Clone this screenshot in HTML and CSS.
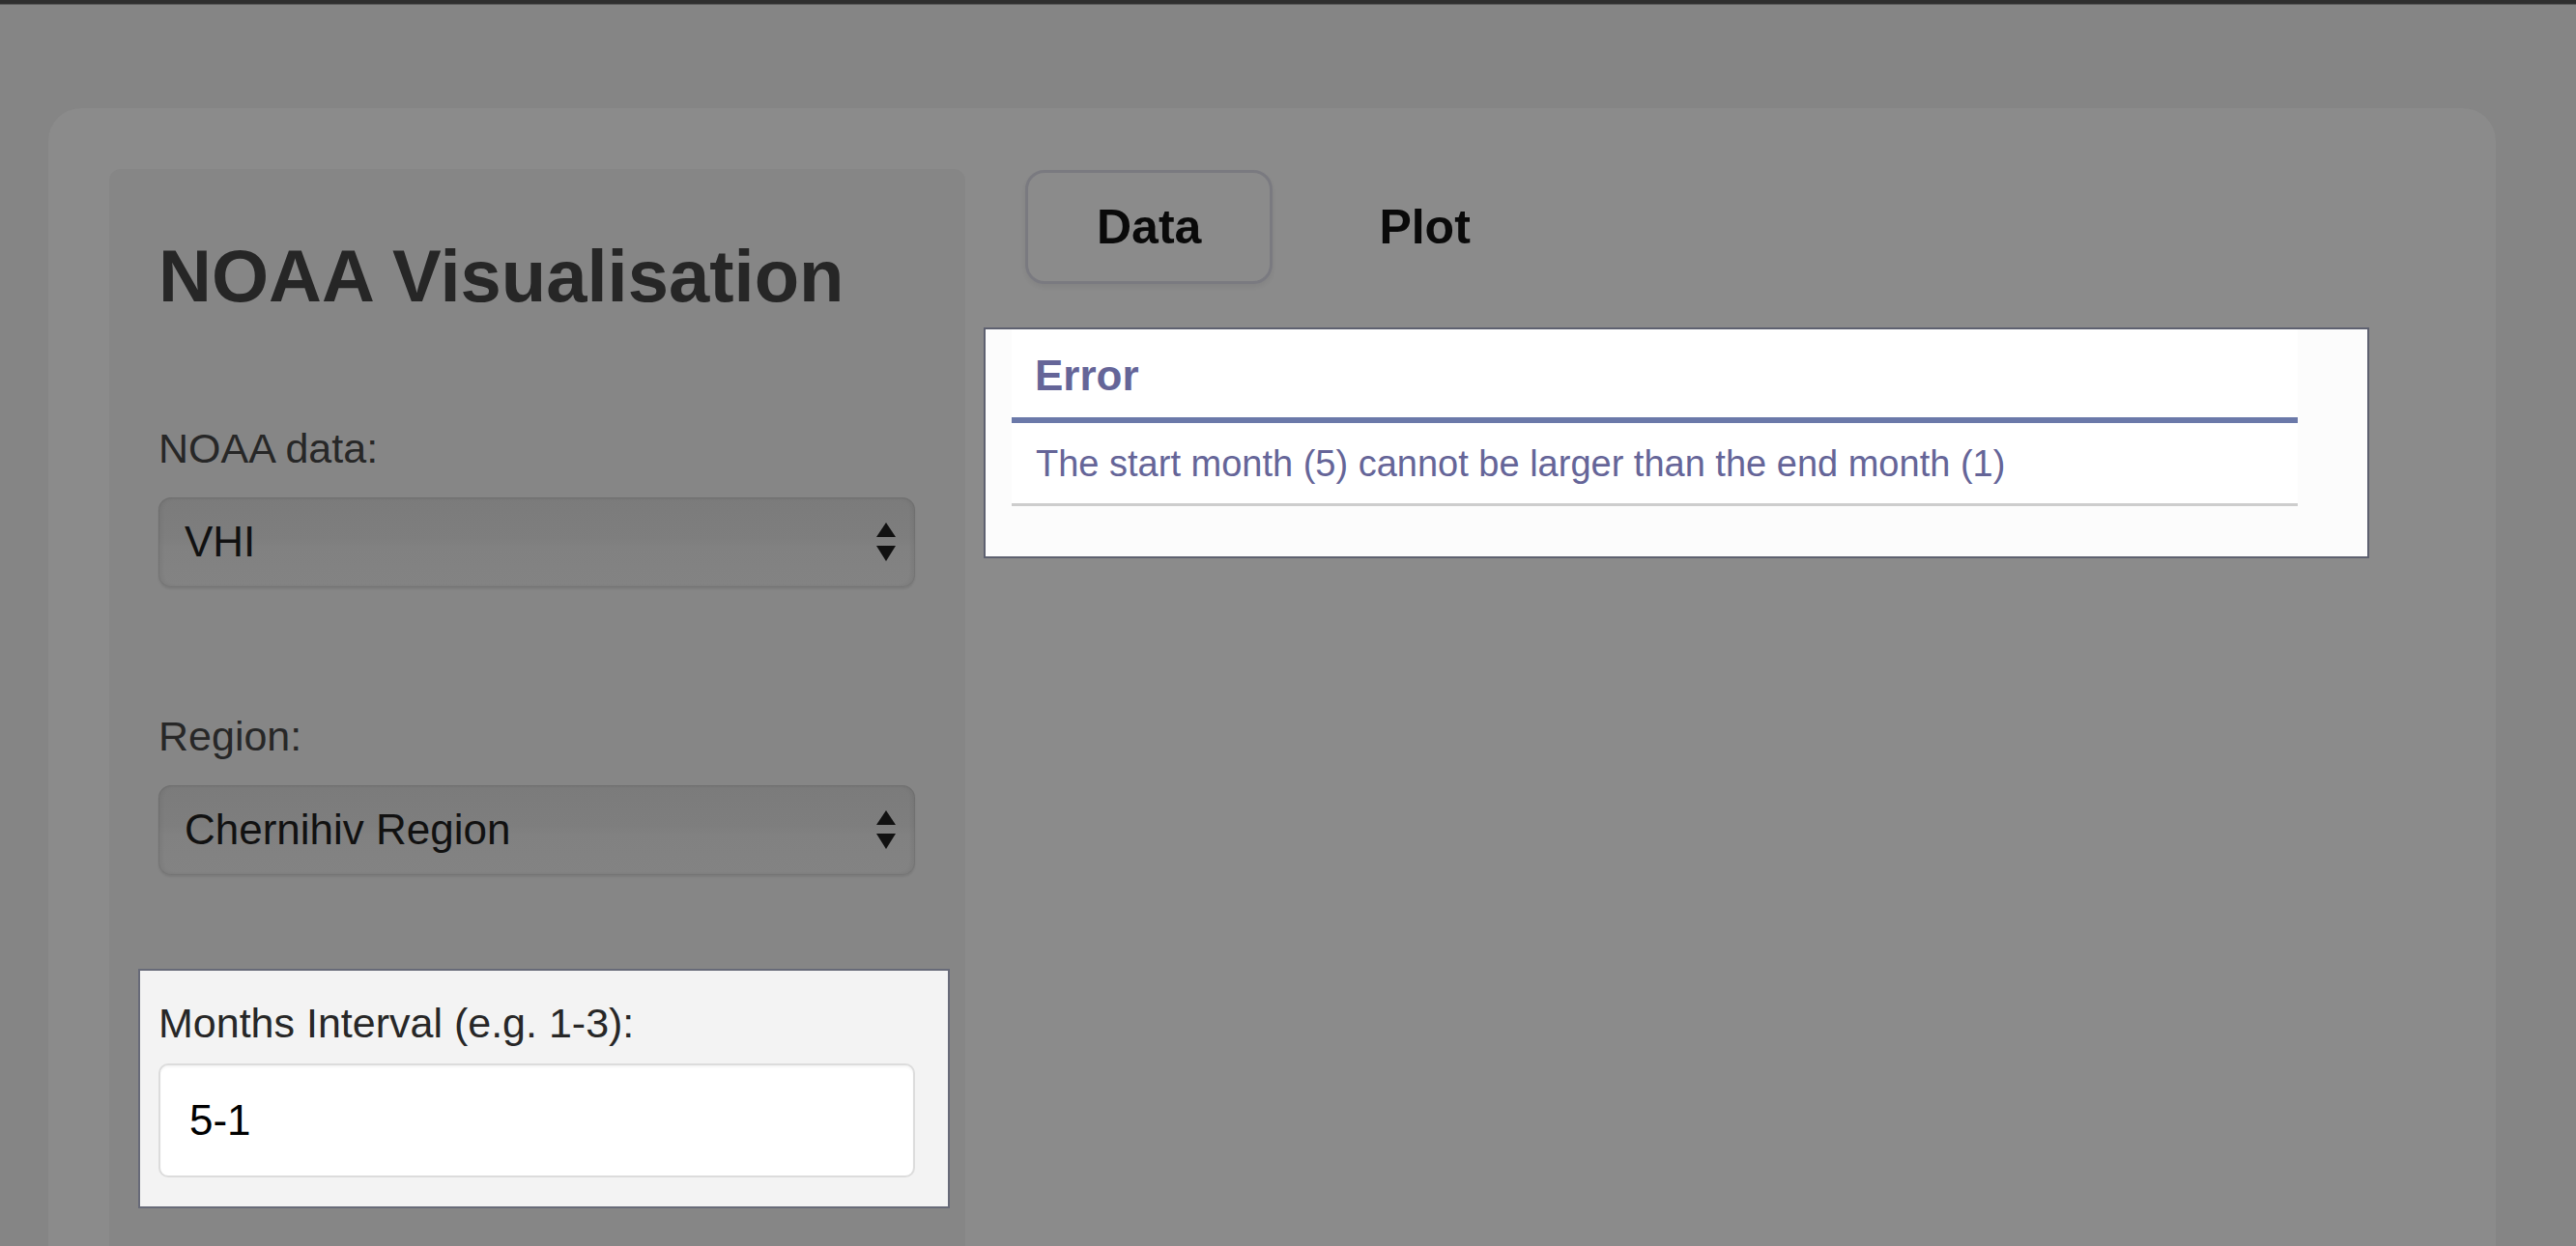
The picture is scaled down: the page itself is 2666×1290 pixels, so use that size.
FILE: index.html
```html
<!DOCTYPE html>
<html lang="en">
<head>
<meta charset="utf-8">
<title>NOAA Visualisation</title>
<link rel="stylesheet" href="styles.css">
</head>
<body>
<div class="topbar"></div>
<div class="page">
  <div class="panel">
    <aside class="sidebar">
      <h1 class="title">NOAA Visualisation</h1>
      <div class="field field-data">
        <label class="label">NOAA data:</label>
        <div class="select">
          <span class="select-value">VHI</span>
          <svg class="arrows" width="20" height="40" viewBox="0 0 20 40"><polygon points="10,0 20,15 0,15" fill="#111"/><polygon points="0,24 20,24 10,40" fill="#111"/></svg>
        </div>
      </div>
      <div class="field field-region">
        <label class="label">Region:</label>
        <div class="select">
          <span class="select-value">Chernihiv Region</span>
          <svg class="arrows" width="20" height="40" viewBox="0 0 20 40"><polygon points="10,0 20,15 0,15" fill="#111"/><polygon points="0,24 20,24 10,40" fill="#111"/></svg>
        </div>
      </div>
      <div class="field highlight">
        <label class="label">Months Interval (e.g. 1-3):</label>
        <div class="input">5-1</div>
      </div>
    </aside>
    <main class="main">
      <nav class="tabs">
        <a class="tab active">Data</a>
        <a class="tab">Plot</a>
      </nav>
      <div class="error-panel">
        <table class="error-table">
          <thead><tr><th>Error</th></tr></thead>
          <tbody><tr><td>The start month (5) cannot be larger than the end month (1)</td></tr></tbody>
        </table>
      </div>
    </main>
  </div>
</div>
</body>
</html>
```

FILE: styles.css
```css
html, body {
  margin: 0;
  padding: 0;
}
body {
  background: #858585;
  font-family: "Liberation Sans", Arial, Helvetica, sans-serif;
  height: 1290px;
  overflow: hidden;
}
.topbar {
  height: 4px;
  background: #2f2f2f;
  border-bottom: 1px solid #5a5a5a;
}
.page {
  padding: 107px 83px 0 50px;
}
.panel {
  display: flex;
  align-items: stretch;
  background: #8b8b8b;
  border-radius: 34px 34px 0 0;
  padding: 63px 0 0 63px;
  height: 1178px;
  box-sizing: border-box;
}
.sidebar {
  width: 886px;
  box-sizing: border-box;
  background: #868686;
  border-radius: 12px 12px 0 0;
  padding: 66px 52px 0 51px;
  flex-shrink: 0;
}
.title {
  margin: 0;
  font-size: 76px;
  line-height: 90px;
  font-weight: bold;
  color: #262626;
}
.field {
  display: flex;
  flex-direction: column;
}
.field-data {
  margin-top: 107px;
}
.field-region {
  margin-top: 128px;
}
.label {
  font-size: 43px;
  line-height: 52px;
  color: #272727;
}
.select {
  margin-top: 25px;
  height: 93px;
  box-sizing: border-box;
  border-radius: 13px;
  background: linear-gradient(#7b7b7b, #7e7e7e 45%, #818181 55%, #838383);
  box-shadow: inset 0 0 0 1px rgba(0,0,0,0.05), inset 3px 0 4px rgba(0,0,0,0.06), inset -3px 0 4px rgba(0,0,0,0.06), 0 2px 2px rgba(0,0,0,0.08);
  display: flex;
  align-items: center;
  justify-content: space-between;
  padding: 0 20px 2px 27px;
}
.select-value {
  font-size: 44px;
  line-height: 52px;
  color: #111;
}
.arrows {
  display: block;
}
.highlight {
  margin: 97px -36px 0 -21px;
  padding: 28px 34px 30px 19px;
  background: #f3f3f3;
  border: 2px solid #676a78;
}
.input {
  margin-top: 16px;
  height: 118px;
  box-sizing: border-box;
  background: #fff;
  border: 2px solid #dcdcdc;
  border-radius: 10px;
  box-shadow: inset 0 2px 2px rgba(0,0,0,0.04);
  padding: 0 30px;
  display: flex;
  align-items: center;
  font-size: 44px;
  color: #000;
}
.main {
  margin-left: 19px;
  display: flex;
  flex-direction: column;
}
.tabs {
  display: flex;
  gap: 36px;
  margin: 1px 0 0 43px;
}
.tab {
  height: 118px;
  box-sizing: border-box;
  display: flex;
  align-items: center;
  padding: 0 71px;
  border: 3px solid transparent;
  border-radius: 20px;
  font-size: 50px;
  font-weight: bold;
  color: #0a0a0a;
}
.tab.active {
  border-color: #7a7a80;
  box-shadow: 0 3px 5px rgba(0,0,0,0.06);
}
.error-panel {
  margin-top: 45px;
  width: 1434px;
  box-sizing: border-box;
  background: #fcfcfc;
  border: 2px solid #5e6170;
  padding: 0 72px 52px 27px;
}
.error-table {
  width: 100%;
  border-collapse: collapse;
  background: #fff;
  color: #656598;
}
.error-table th {
  text-align: left;
  font-size: 44px;
  line-height: 50px;
  font-weight: bold;
  padding: 23px 24px 18px;
  border-bottom: 6px solid #6b79a9;
}
.error-table td {
  font-size: 38px;
  line-height: 46px;
  padding: 19px 25px 18px;
  border-bottom: 3px solid #cdcdcd;
}
```
